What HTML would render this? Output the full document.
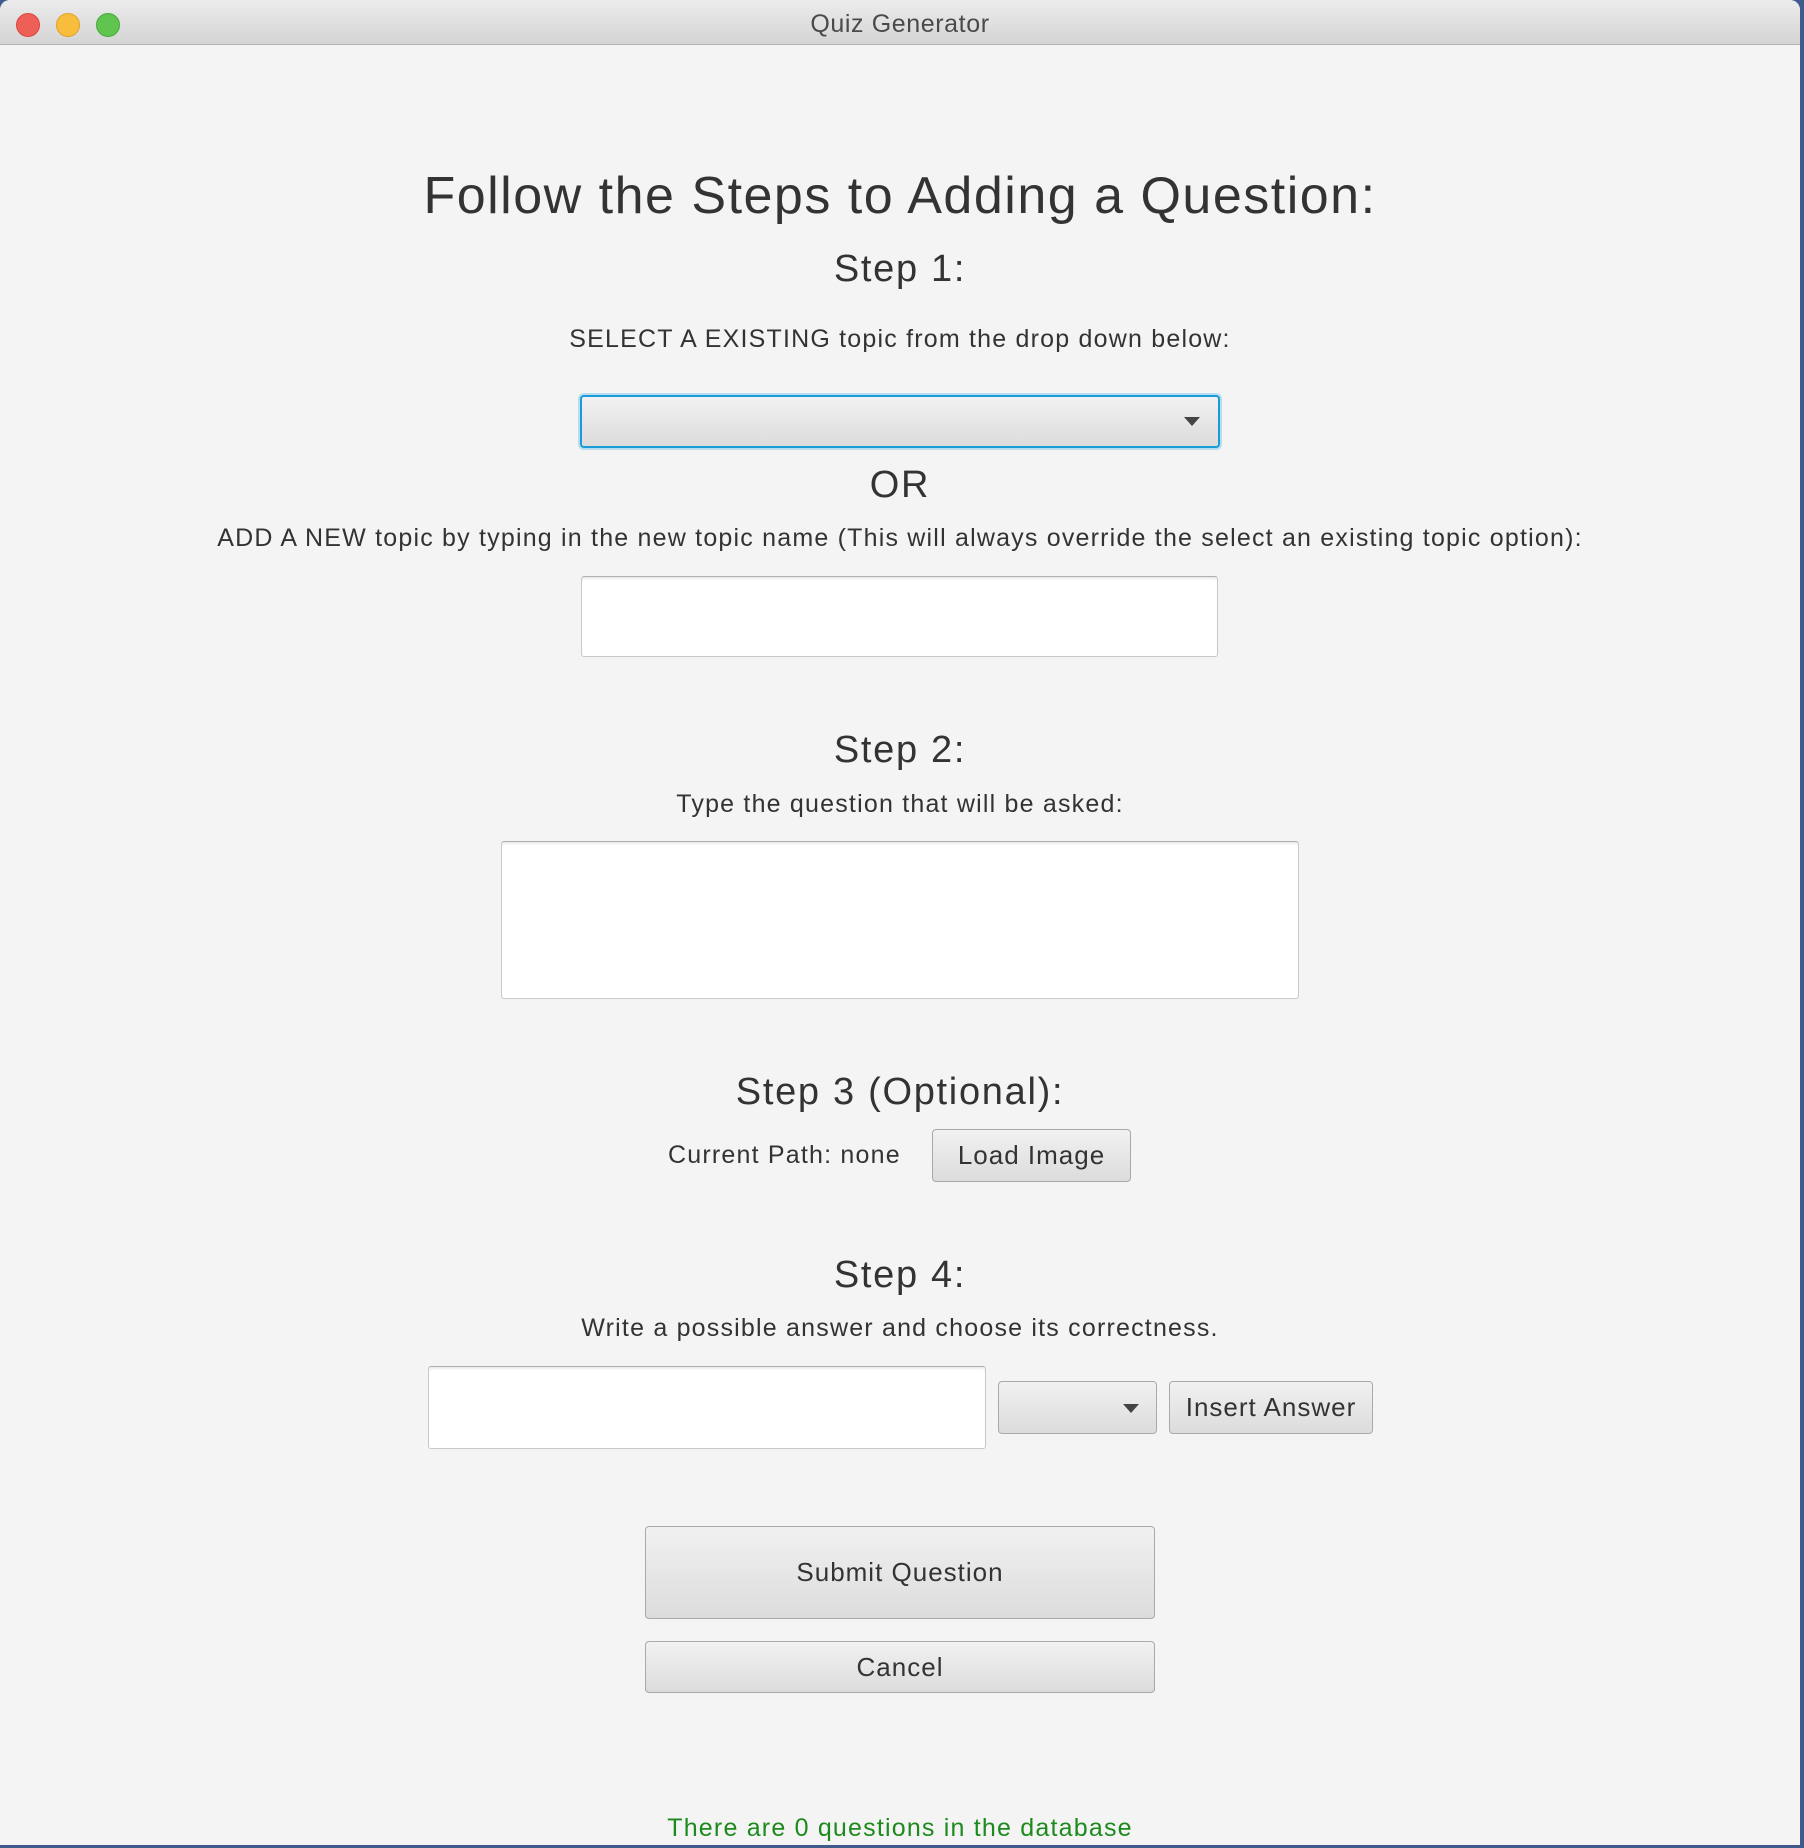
<!DOCTYPE html>
<html><head><meta charset="utf-8"><style>
body{margin:0;width:1804px;height:1848px;background:#3f5b8c;position:relative;overflow:hidden;font-family:"Liberation Sans",sans-serif;color:#333}
#win{position:absolute;left:0;top:0;width:1800px;height:1845px;background:#f4f4f4;border-radius:10px 10px 0 0;overflow:hidden}
#tb{position:absolute;left:0;top:0;width:100%;height:44px;background:linear-gradient(#ececec,#d4d4d4);border-bottom:1px solid #b5b5b5}
.dot{position:absolute;top:13px;width:22px;height:22px;border-radius:50%}
.t{position:absolute;left:0;width:1800px;text-align:center;white-space:nowrap;line-height:1;letter-spacing:1.2px}
.h{letter-spacing:1.7px}
.box{position:absolute;box-sizing:border-box}
.field{background:#fff;border:1px solid #c8c8c8;border-top-color:#b0b0b0;border-radius:3px;box-shadow:inset 0 3px 3px -2px #ddd}
.btn{background:linear-gradient(#f1f1f1,#dcdcdc);border:1px solid #a9a9a9;border-radius:4px;display:flex;align-items:center;justify-content:center;font-size:26px;color:#333;letter-spacing:1px}
.arr{position:absolute;width:0;height:0;border-left:8px solid transparent;border-right:8px solid transparent;border-top:9px solid #444}
</style></head><body>
<div id="win">
<div id="tb">
<div class="dot" style="left:16px;background:#ee5f57;border:1px solid #d8473f"></div>
<div class="dot" style="left:56px;background:#f8bd3d;border:1px solid #dfa124"></div>
<div class="dot" style="left:96px;background:#5fc54f;border:1px solid #46a93b"></div>
<div class="t" style="top:12px;font-size:25px;color:#4a4a4a;letter-spacing:0.6px">Quiz Generator</div>
</div>
<div class="t" style="top:170px;font-size:52px;letter-spacing:1.5px">Follow the Steps to Adding a Question:</div>
<div class="t h" style="top:250px;font-size:38px">Step 1:</div>
<div class="t" style="top:327px;font-size:25px">SELECT A EXISTING topic from the drop down below:</div>
<div class="box btn" style="left:580px;top:395px;width:640px;height:53px;border:2px solid #1a9ad6;box-shadow:0 0 0 2px #b8ddf0"><div class="arr" style="right:18px;top:20px"></div></div>
<div class="t h" style="top:466px;font-size:38px">OR</div>
<div class="t" style="top:526px;font-size:25px">ADD A NEW topic by typing in the new topic name (This will always override the select an existing topic option):</div>
<div class="box field" style="left:581px;top:576px;width:637px;height:81px"></div>
<div class="t h" style="top:731px;font-size:38px">Step 2:</div>
<div class="t" style="top:792px;font-size:25px">Type the question that will be asked:</div>
<div class="box field" style="left:501px;top:841px;width:798px;height:158px"></div>
<div class="t h" style="top:1073px;font-size:38px">Step 3 (Optional):</div>
<div class="t" style="top:1143px;font-size:25px;left:668px;width:auto">Current Path: none</div>
<div class="box btn" style="left:932px;top:1129px;width:199px;height:53px">Load Image</div>
<div class="t h" style="top:1256px;font-size:38px">Step 4:</div>
<div class="t" style="top:1316px;font-size:25px">Write a possible answer and choose its correctness.</div>
<div class="box field" style="left:428px;top:1366px;width:558px;height:83px"></div>
<div class="box btn" style="left:998px;top:1381px;width:159px;height:53px"><div class="arr" style="right:17px;top:22px"></div></div>
<div class="box btn" style="left:1169px;top:1381px;width:204px;height:53px">Insert Answer</div>
<div class="box btn" style="left:645px;top:1526px;width:510px;height:93px">Submit Question</div>
<div class="box btn" style="left:645px;top:1641px;width:510px;height:52px">Cancel</div>
<div class="t" style="top:1816px;font-size:25px;color:#1c8a1c">There are 0 questions in the database</div>
</div>
</body></html>
